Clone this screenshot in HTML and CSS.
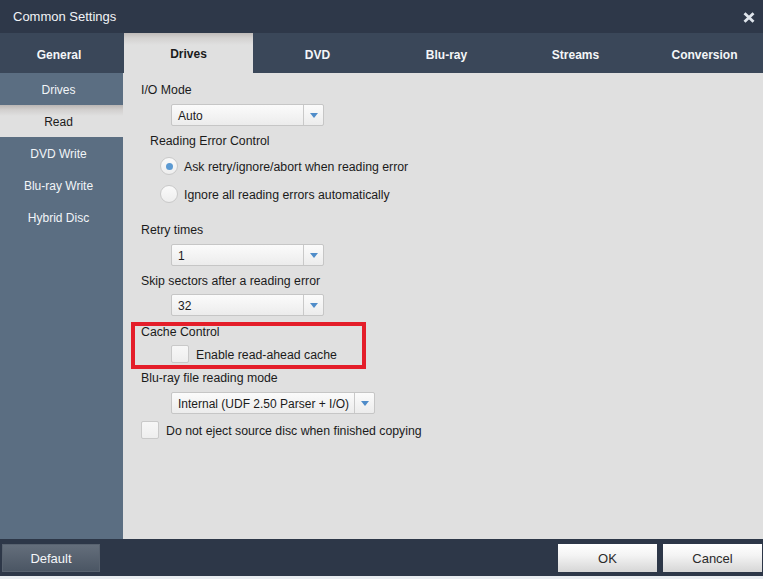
FILE: index.html
```html
<!DOCTYPE html>
<html>
<head>
<meta charset="utf-8">
<link rel="stylesheet" href="styles.css">
</head>
<body>
<div class="window">
  <div class="titlebar">
    <span class="title">Common Settings</span>
    <svg class="close" width="12" height="11" viewBox="0 0 12 11"><path d="M1.5 1.2 L10.5 9.8 M10.5 1.2 L1.5 9.8" stroke="#dfe5ec" stroke-width="2.8" stroke-linecap="butt"/></svg>
  </div>
  <div class="tabs">
    <div class="tab first">General</div>
    <div class="tab active">Drives</div>
    <div class="tab">DVD</div>
    <div class="tab">Blu-ray</div>
    <div class="tab">Streams</div>
    <div class="tab">Conversion</div>
  </div>
  <div class="main">
    <div class="sidebar">
      <div class="side-item">Drives</div>
      <div class="side-item active">Read</div>
      <div class="side-item">DVD Write</div>
      <div class="side-item">Blu-ray Write</div>
      <div class="side-item">Hybrid Disc</div>
    </div>
    <div class="content">
      <div class="label l-io">I/O Mode</div>
      <div class="select s-io"><span class="sel-text">Auto</span><span class="sel-arrow"><i></i></span></div>
      <div class="label l-rec">Reading Error Control</div>
      <div class="option o-1"><span class="radio checked"></span><span class="opt-text">Ask retry/ignore/abort when reading error</span></div>
      <div class="option o-2"><span class="radio"></span><span class="opt-text">Ignore all reading errors automatically</span></div>
      <div class="label l-retry">Retry times</div>
      <div class="select s-std"><span class="sel-text">1</span><span class="sel-arrow"><i></i></span></div>
      <div class="label l-skip">Skip sectors after a reading error</div>
      <div class="select s-std s-skip"><span class="sel-text">32</span><span class="sel-arrow"><i></i></span></div>
      <div class="cache">
        <div class="label l-cache">Cache Control</div>
        <div class="option o-cache"><span class="check"></span><span class="opt-text">Enable read-ahead cache</span></div>
        <div class="highlight"></div>
      </div>
      <div class="label l-bd">Blu-ray file reading mode</div>
      <div class="select s-bd"><span class="sel-text">Internal (UDF 2.50 Parser + I/O)</span><span class="sel-arrow"><i></i></span></div>
      <div class="option o-eject"><span class="check"></span><span class="opt-text">Do not eject source disc when finished copying</span></div>
    </div>
  </div>
  <div class="footer">
    <div class="btn btn-dark">Default</div>
    <div class="spacer"></div>
    <div class="btn btn-light">OK</div>
    <div class="btn btn-light">Cancel</div>
  </div>
  <div class="strip"></div>
</div>
</body>
</html>
```
FILE: styles.css
```css
* { box-sizing: border-box; }
html, body { margin: 0; padding: 0; }
body {
  font-family: "Liberation Sans", Arial, sans-serif;
  font-size: 12px;
  color: #1b1b1b;
  background: #e0e0e0;
}
.window {
  width: 763px;
  height: 579px;
  display: flex;
  flex-direction: column;
  overflow: hidden;
}
.titlebar {
  height: 33px;
  flex: none;
  background: #2e3849;
  display: flex;
  align-items: center;
  padding: 0 8px 0 13px;
}
.title {
  color: #f2f4f7;
  font-size: 13px;
  flex: 1;
  padding-bottom: 1px;
}
.close { margin-top: 1px; }
.tabs {
  height: 40px;
  flex: none;
  background: #3a4759;
  display: grid;
  grid-template-columns: 124px repeat(5, 129px);
  overflow: hidden;
}
.tab {
  display: flex;
  align-items: center;
  justify-content: center;
  color: #f4f6f8;
  font-weight: bold;
  font-size: 12px;
  padding-top: 3px;
}
.tab.first { padding-right: 6px; }
.tab.active {
  color: #1b1b1b;
  background: linear-gradient(#bfbbb9 0px, #d3d1d0 5px, #e0e0e0 12px, #e0e0e0);
  padding-top: 1px;
}
.main {
  flex: 1;
  display: flex;
  min-height: 0;
}
.sidebar {
  width: 123px;
  flex: none;
  background: #5b6e82;
}
.side-item {
  height: 32px;
  display: flex;
  align-items: center;
  justify-content: center;
  color: #f2f5f8;
  font-size: 12px;
  padding-top: 2px;
  padding-right: 6px;
}
.side-item.active {
  color: #1b1b1b;
  background: linear-gradient(#bab6b4 0px, #d2d0cf 5px, #e0e0e0 11px, #e0e0e0);
  padding-top: 1px;
}
.content {
  flex: 1;
  background: #e0e0e0;
  padding: 8px 0 0 18px;
  display: flex;
  flex-direction: column;
  align-items: flex-start;
  font-size: 12.3px;
}
.label {
  height: 16px;
  line-height: 18px;
  white-space: nowrap;
}
.l-io { margin-top: 0; }
.l-rec { margin-top: 6px; margin-left: 9px; }
.l-retry { margin-top: 18px; }
.l-skip { margin-top: 6px; }
.l-cache { margin-top: 0; }
.l-bd { margin-top: 6px; }

.select {
  height: 22px;
  display: flex;
  margin-left: 30px;
  border: 1px solid #c6c6c6;
  border-radius: 2px;
  background: linear-gradient(#fbfbfb, #ececec);
}
.s-io { margin-top: 7px; width: 153px; }
.s-std { margin-top: 7px; width: 153px; }
.s-skip { margin-top: 6px; }
.s-bd { margin-top: 7px; width: 204px; }
.sel-text {
  flex: 1;
  font-size: 12px;
  line-height: 22px;
  height: 20px;
  padding-left: 6px;
  white-space: nowrap;
}
.sel-arrow {
  width: 20px;
  flex: none;
  border-left: 1px solid #c9c9c9;
  display: flex;
  align-items: center;
  justify-content: center;
}
.sel-arrow i {
  width: 0;
  height: 0;
  border-left: 4px solid transparent;
  border-right: 4px solid transparent;
  border-top: 5px solid #4f8cc9;
  margin-top: 1px;
}
.option {
  height: 18px;
  display: flex;
  align-items: center;
  gap: 6px;
}
.opt-text {
  padding-top: 2px;
  white-space: nowrap;
}
.o-1 { margin-top: 9px; margin-left: 19px; }
.o-2 { margin-top: 10px; margin-left: 19px; }
.o-cache { margin-top: 6px; margin-left: 30px; gap: 7px; }
.o-eject { margin-top: 7px; gap: 7px; }
.radio {
  width: 18px;
  height: 18px;
  flex: none;
  border-radius: 50%;
  border: 1px solid #c9c9c9;
  background: linear-gradient(#fafafa, #eeeeee);
  display: flex;
  align-items: center;
  justify-content: center;
}
.radio.checked::after {
  content: "";
  width: 7px;
  height: 7px;
  border-radius: 50%;
  background: #5c9ad2;
}
.check {
  width: 18px;
  height: 18px;
  flex: none;
  border: 1px solid #c9c9c9;
  border-radius: 2px;
  background: linear-gradient(#f7f7f7, #eeeeee);
}
.cache {
  position: relative;
  margin-top: 7px;
}
.highlight {
  position: absolute;
  left: -10px;
  top: -1px;
  width: 235px;
  height: 47px;
  border: 4px solid #e41e2a;
}
.footer {
  height: 37px;
  flex: none;
  background: #2d3748;
  display: flex;
  align-items: flex-start;
  padding: 5px 1px 0 2px;
  gap: 6px;
}
.spacer { flex: 1; }
.btn {
  height: 28px;
  display: flex;
  align-items: center;
  justify-content: center;
  font-size: 13px;
}
.btn-dark {
  width: 98px;
  color: #f4f6f9;
  background: linear-gradient(#646e7b, #4b5664);
  border: 1px solid #58626f;
}
.btn-light {
  width: 99px;
  color: #2a2a2a;
  background: linear-gradient(#ffffff, #f4f4f4 40%, #d6d6d6);
}
.strip {
  height: 3px;
  flex: none;
  background: #e9edf1;
}
```
